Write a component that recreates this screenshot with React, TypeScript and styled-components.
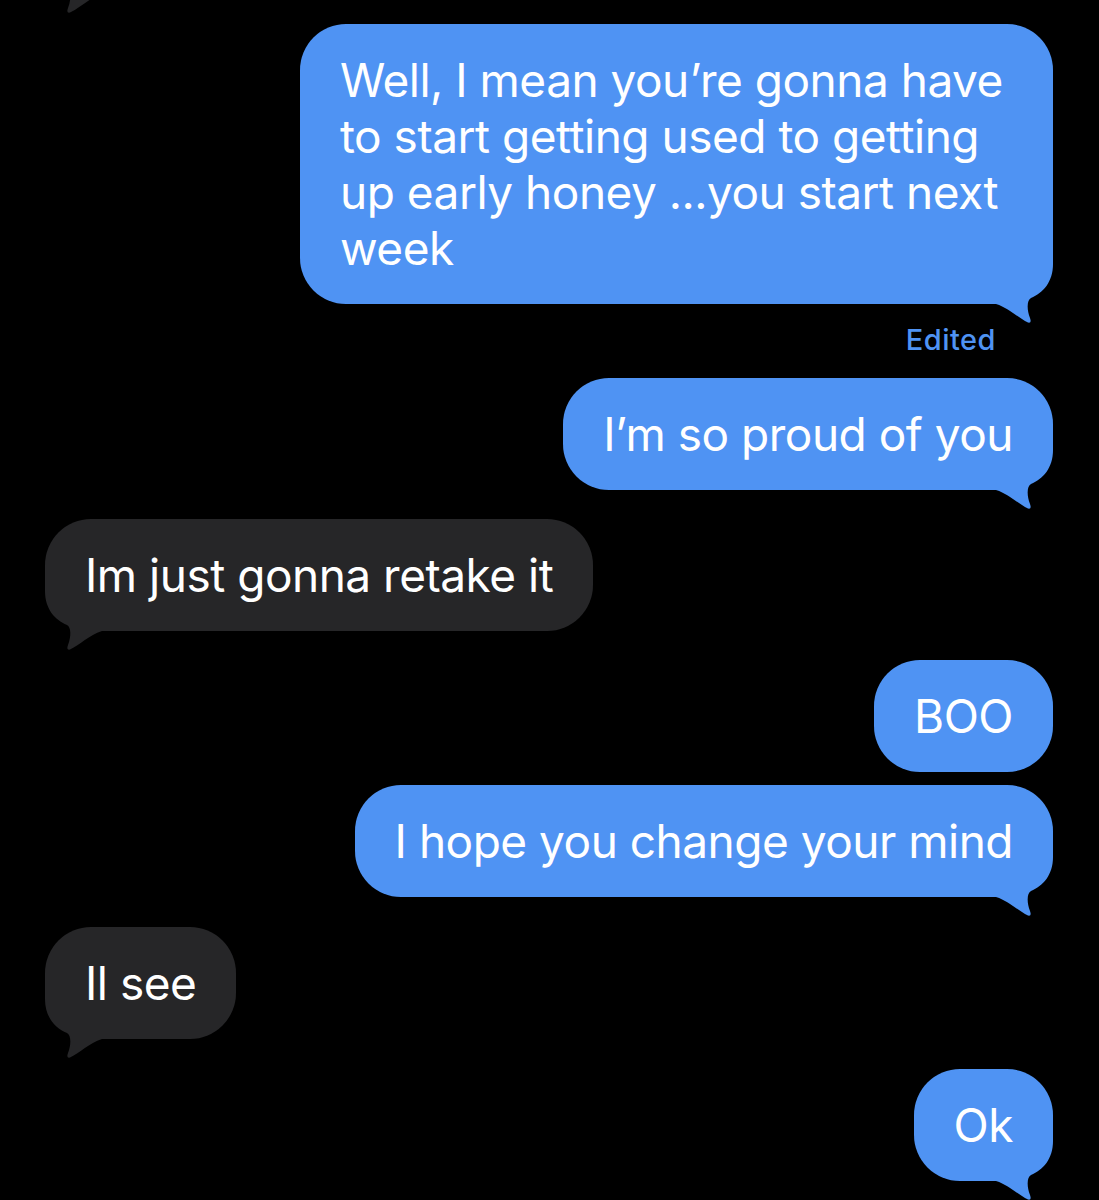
import React from 'react';
import styled, { createGlobalStyle } from 'styled-components';

type Side = 'in' | 'out';

const GlobalStyle = createGlobalStyle`
  html, body {
    margin: 0;
    padding: 0;
    background: #000;
    overflow: hidden;
  }
  body {
    font-family: Inter, "Noto Sans", "Liberation Sans", sans-serif;
    -webkit-font-smoothing: antialiased;
  }
`;

const BLUE = '#4f93f3';
const GREY = '#262628';

const Thread = styled.main`
  display: flex;
  flex-direction: column;
  height: 1200px;
  box-sizing: border-box;
  padding: 0 46px 0 45px;
`;

const Row = styled.div<{ $side: Side; $gap: number }>`
  display: flex;
  justify-content: ${p => (p.$side === 'out' ? 'flex-end' : 'flex-start')};
  margin-top: ${p => p.$gap}px;
`;

const Bubble = styled.div<{ $side: Side }>`
  position: relative;
  max-width: 753px;
  box-sizing: border-box;
  padding: 28px 40px;
  border-radius: 46px;
  background: ${p => (p.$side === 'out' ? BLUE : GREY)};
  color: #fff;
  font-size: 46px;
  line-height: 56px;
  letter-spacing: -0.5px;
`;

// the message scrolled off above the top edge, only its tail peeks in
const ScrolledBubble = styled(Bubble)`
  width: 320px;
  height: 112px;
`;

const Text = styled.span`
  position: relative;
  z-index: 1;
`;

const TailSvg = styled.svg<{ $side: Side }>`
  position: absolute;
  bottom: -20px;
  width: 60px;
  height: 72px;
  ${p => (p.$side === 'out' ? 'right: -2px;' : 'left: -2px; transform: scaleX(-1);')}
`;

const Meta = styled.div`
  align-self: flex-end;
  margin: 19px 57px 0 0;
  font-size: 29px;
  line-height: 34px;
  font-weight: 500;
  letter-spacing: 0.5px;
  color: ${BLUE};
`;

const Tail = ({ side }: { side: Side }) => (
  <TailSvg $side={side} viewBox="-58 -52 60 72" aria-hidden>
    <path
      d="M0 -52 L0 -40 C0 -22 -10 -11 -22 -6 C-26 -4 -26.5 5 -23 14 Q-21 19.5 -25 18.5 C-35 14 -44 4 -57 0 L-57 -52 Z"
      fill={side === 'out' ? BLUE : GREY}
    />
  </TailSvg>
);

type Msg = { side: Side; text: string; gap: number; tail?: boolean; edited?: boolean };

const messages: Msg[] = [
  {
    side: 'out',
    text: 'Well, I mean you’re gonna have to start getting used to getting up early honey ...you start next week',
    gap: 30,
    tail: true,
    edited: true,
  },
  { side: 'out', text: 'I’m so proud of you', gap: 21, tail: true },
  { side: 'in', text: 'Im just gonna retake it', gap: 29, tail: true },
  { side: 'out', text: 'BOO', gap: 29 },
  { side: 'out', text: 'I hope you change your mind', gap: 13, tail: true },
  { side: 'in', text: 'Il see', gap: 30, tail: true },
  { side: 'out', text: 'Ok', gap: 30, tail: true },
];

export default function App() {
  return (
    <>
      <GlobalStyle />
      <Thread>
        <Row $side="in" $gap={-118}>
          <ScrolledBubble $side="in">
            <Tail side="in" />
          </ScrolledBubble>
        </Row>
        {messages.map((m, i) => (
          <React.Fragment key={i}>
            <Row $side={m.side} $gap={m.gap}>
              <Bubble $side={m.side}>
                <Text>{m.text}</Text>
                {m.tail && <Tail side={m.side} />}
              </Bubble>
            </Row>
            {m.edited && <Meta>Edited</Meta>}
          </React.Fragment>
        ))}
      </Thread>
    </>
  );
}
